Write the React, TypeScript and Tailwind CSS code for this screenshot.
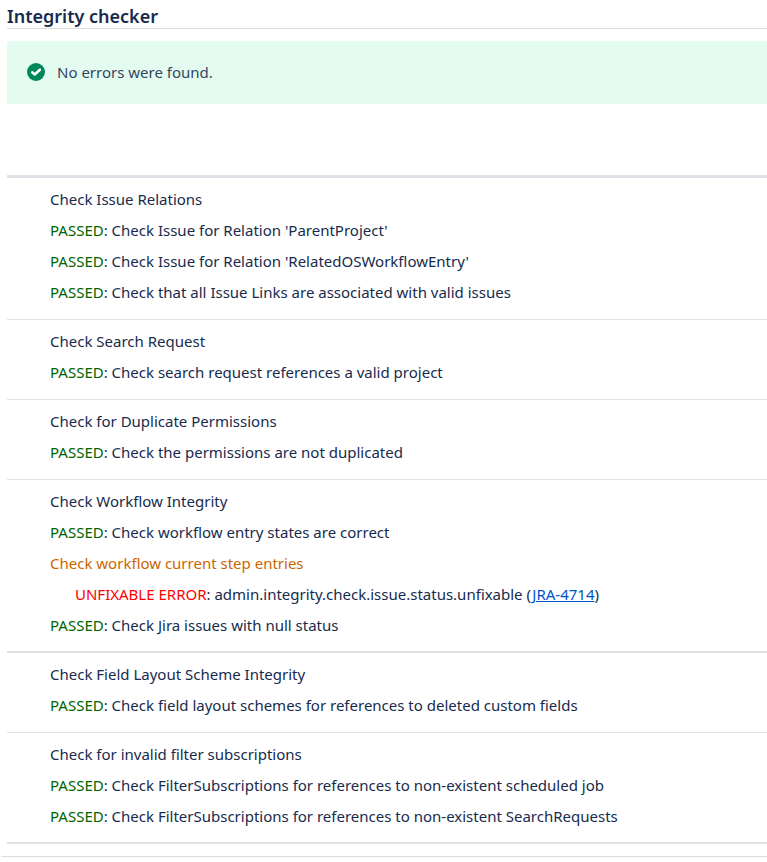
import type { ReactNode } from 'react'

type Check = {
  label: string
  status: 'passed' | 'warning'
  error?: ReactNode
}

type Section = {
  title: string
  checks: Check[]
  thick?: boolean
}

const sections: Section[] = [
  {
    title: 'Check Issue Relations',
    checks: [
      { status: 'passed', label: "Check Issue for Relation 'ParentProject'" },
      { status: 'passed', label: "Check Issue for Relation 'RelatedOSWorkflowEntry'" },
      { status: 'passed', label: 'Check that all Issue Links are associated with valid issues' },
    ],
  },
  {
    title: 'Check Search Request',
    checks: [{ status: 'passed', label: 'Check search request references a valid project' }],
  },
  {
    title: 'Check for Duplicate Permissions',
    checks: [{ status: 'passed', label: 'Check the permissions are not duplicated' }],
  },
  {
    title: 'Check Workflow Integrity',
    thick: true,
    checks: [
      { status: 'passed', label: 'Check workflow entry states are correct' },
      {
        status: 'warning',
        label: 'Check workflow current step entries',
        error: (
          <>
            admin.integrity.check.issue.status.unfixable (
            <a href="#JRA-4714" className="text-[#0052cc] underline">
              JRA-4714
            </a>
            )
          </>
        ),
      },
      { status: 'passed', label: 'Check Jira issues with null status' },
    ],
  },
  {
    title: 'Check Field Layout Scheme Integrity',
    checks: [
      { status: 'passed', label: 'Check field layout schemes for references to deleted custom fields' },
    ],
  },
  {
    title: 'Check for invalid filter subscriptions',
    thick: true,
    checks: [
      { status: 'passed', label: 'Check FilterSubscriptions for references to non-existent scheduled job' },
      { status: 'passed', label: 'Check FilterSubscriptions for references to non-existent SearchRequests' },
    ],
  },
]

function SuccessIcon() {
  return (
    <svg viewBox="0 0 18 18" className="h-[18px] w-[18px] shrink-0" aria-hidden="true">
      <circle cx="9" cy="9" r="9" fill="#00875a" />
      <path
        d="M5.2 9.3l2.5 2.2 5.2-4.8"
        fill="none"
        stroke="#fff"
        strokeWidth="2.6"
        strokeLinecap="round"
        strokeLinejoin="round"
      />
    </svg>
  )
}

function CheckItem({ check }: { check: Check }) {
  if (check.status === 'passed') {
    return (
      <li>
        <span className="text-[#006400]">PASSED</span>: {check.label}
      </li>
    )
  }

  return (
    <li>
      <span className="text-[#cc6600]">{check.label}</span>
      <p className="pl-[25px]">
        <span className="text-[#ff0000]">UNFIXABLE ERROR</span>: {check.error}
      </p>
    </li>
  )
}

export default function App() {
  return (
    <main className="bg-white pb-1 font-['Noto_Sans','Open_Sans',sans-serif] text-[15px] leading-[31px] text-[#172b4d]">
      <div className="pl-[7px]">
        <h1 className="border-b border-[#dcdcdc] pt-1 text-lg leading-6 font-semibold">
          Integrity checker
        </h1>

        <div
          role="status"
          className="mt-3 flex items-start gap-3 rounded-l-[3px] bg-[#e3fcef] py-4 pl-5 text-[#344563]"
        >
          <span className="flex h-[30px] items-center">
            <SuccessIcon />
          </span>
          <p>No errors were found.</p>
        </div>

        <div className="mt-[71px] border-t-3 border-[#dfe1e6]">
          {sections.map((section) => (
            <section
              key={section.title}
              className={`border-[#dfe1e6] pt-[6px] pl-[43px] ${section.thick ? 'border-b-2 pb-[10px]' : 'border-b pb-[11px]'}`}
            >
              <h2>{section.title}</h2>
              <ul>
                {section.checks.map((check) => (
                  <CheckItem key={check.label} check={check} />
                ))}
              </ul>
            </section>
          ))}
        </div>
      </div>

      <hr className="mt-3 ml-px border-[#dcdcdc]" />
    </main>
  )
}
